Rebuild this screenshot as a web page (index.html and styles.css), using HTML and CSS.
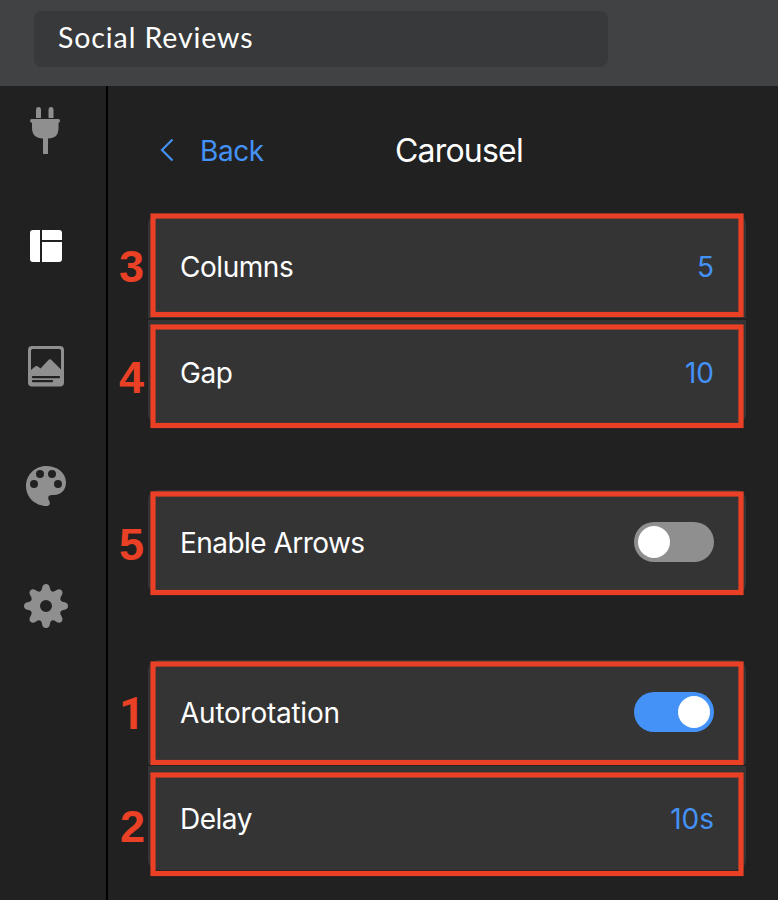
FILE: index.html
```html
<!DOCTYPE html>
<html lang="en">
<head>
<meta charset="utf-8">
<title>Social Reviews</title>
<link rel="stylesheet" href="styles.css">
</head>
<body>
<header class="topbar"><div class="name-field"><span class="name">Social Reviews</span></div></header>
<div class="workspace">
  <nav class="sidebar">
    <svg class="icon plug" viewBox="0 0 48 48"><path d="M15 4q0-3 2.500-3T20 4v8h-5zM27.500 4q0-3 2.500-3t2.500 3v8h-5zM9 14.500q0-1.500 1.500-1.500h27q1.500 0 1.500 1.500T37.500 17v5q0 10.500-10.500 10.500V48h-5V32.500Q11 32 11 22v-5q-2-.8-2-2.500z"/></svg>
    <svg class="icon active" viewBox="0 0 48 48"><path d="M12 8h7v32h-7q-3 0-3-3V11q0-3 3-3zM21 8h17q3 0 3 3v7H21zM21 20h20v17q0 3-3 3H21z"/></svg>
    <svg class="icon" viewBox="0 0 48 48"><path fill-rule="evenodd" d="M11 4h28q4 0 4 4v32.500q0 4-4 4H11q-4 0-4-4V8q0-4 4-4zm1 3q-2 0-2 2v19l4-3.500q1.500-1 3 0l2.500 2L27 18.500q2-2.500 4 0l9 9V9q0-2-2-2z"/><path class="cut" d="M12 35.200h26M12 39.200h19"/></svg>
    <svg class="icon" viewBox="0 0 48 48"><path fill-rule="evenodd" d="M25 4c11 0 20 6.500 20 16.500C45 28 40 33 33 33h-2c-4 0-4.500 3-3 5.500 1.500 3 1 5.500-2.500 5.500C14 44 5 35 5 24S14 4 25 4zM19 8a4 4 0 1 0 0 8 4 4 0 0 0 0-8zm12 0a4 4 0 1 0 0 8 4 4 0 0 0 0-8zM13 18a4 4 0 1 0 0 8 4 4 0 0 0 0-8zm24 0a4 4 0 1 0 0 8 4 4 0 0 0 0-8z"/></svg>
    <svg class="icon" viewBox="0 0 48 48"><path fill-rule="evenodd" d="M21 6.500C21.500 3 23 2 25 2s3.500 1 4 4.500c.5 3 3 4 5.500 2.300 2.500-1.800 4.500-2 6-.5s1.300 3.500-.3 6C38.400 17 39.500 19.500 42.500 20c3.500.5 4.500 2 4.500 4s-1 3.500-4.500 4c-3 .5-4.100 3-2.300 5.500 1.600 2.700 1.800 4.700.3 6.200s-3.500 1.300-6-.5c-2.500-1.700-5-.7-5.500 2.300-.5 3.500-2 4.500-4 4.500s-3.500-1-4-4.500c-.5-3-3-4-5.500-2.300-2.500 1.800-4.500 2-6 .5s-1.300-3.500.3-6.200C11.600 31 10.500 28.500 7.500 28 4 27.500 3 26 3 24s1-3.500 4.500-4c3-.5 4.100-3 2.300-5.700-1.600-2.500-1.800-4.500-.3-6s3.500-1.300 6 .5C18 10.500 20.500 9.500 21 6.500zM25 18a6 6 0 1 0 0 12 6 6 0 0 0 0-12z"/></svg>
  </nav>
  <main class="panel">
    <div class="heading">
      <a class="back"><svg class="chevron" viewBox="0 0 14 24"><path d="M12.500 1.500L2 12l10.500 10.500"/></svg><span class="back-label">Back</span></a>
      <h1 class="title">Carousel</h1>
    </div>
    <section class="group">
      <div class="row"><span class="label columns">Columns</span><span class="value">5</span>
        <svg class="frame f1" viewBox="0 0 598 106"><rect x="5" y="3" width="588" height="98.500"/></svg><b class="num n1">3</b></div>
      <div class="row"><span class="label gap">Gap</span><span class="value ten">10</span>
        <svg class="frame f2" viewBox="0 0 598 106"><rect x="5" y="3" width="588" height="98.500"/></svg><b class="num n2">4</b></div>
    </section>
    <section class="group">
      <div class="row"><span class="label arrows">Enable Arrows</span><span class="switch"></span>
        <svg class="frame f3" viewBox="0 0 598 106"><rect x="5" y="3" width="588" height="98.500"/></svg><b class="num n3">5</b></div>
    </section>
    <section class="group">
      <div class="row"><span class="label auto">Autorotation</span><span class="switch on"></span>
        <svg class="frame f3" viewBox="0 0 598 106"><rect x="5" y="3" width="588" height="98.500"/></svg><b class="num one">1</b></div>
      <div class="row"><span class="label delay">Delay</span><span class="value secs">10s</span>
        <svg class="frame f5" viewBox="0 0 598 106"><rect x="5" y="3" width="588" height="98.500"/></svg><b class="num n5">2</b></div>
    </section>
  </main>
</div>
</body>
</html>
```
FILE: styles.css
```css
* { box-sizing: border-box; }
body { margin: 0; height: 900px; overflow: hidden; background: #212121; color: #fff; font-family: Inter, "Liberation Sans", sans-serif; font-size: 28px; }
.topbar { height: 86px; padding: 11px 34px; background: #414243; }
.name-field { width: 574px; height: 56px; padding: 0 0 3px 24px; border-radius: 8px; background: #38393a; display: flex; align-items: center; }
.name { font-family: Lato, sans-serif; font-size: 28.500px; line-height: 53px; letter-spacing: .9px; }
.workspace { display: flex; height: 814px; }
.sidebar { width: 108px; border-right: 2px solid #000; padding: 20px 0 0 21px; display: flex; flex-direction: column; gap: 72px; }
.icon { display: block; width: 48px; height: 48px; flex: none; fill: #8f8f8f; }
.plug { margin-bottom: -4px; }
.active { fill: #fff; }
.cut { fill: none; stroke: #212121; stroke-width: 2.300; stroke-linecap: round; }
.panel { width: 638px; padding-left: 40px; }
.heading { height: 128px; display: flex; align-items: center; }
.back { width: 247px; padding-left: 12px; display: flex; align-items: center; gap: 26px; color: #4492f8; }
.back-label { padding-top: 1px; letter-spacing: -.4px; }
.chevron { width: 14px; height: 24px; fill: none; stroke: #4492f8; stroke-width: 2.200; }
.title { margin: 0; padding-top: 1px; font-size: 32px; font-weight: 400; letter-spacing: -.8px; }
.group { display: flex; flex-direction: column; gap: 2px; margin-bottom: 66px; border-radius: 10px; }
.row { position: relative; height: 104px; padding: 0 32px; display: flex; align-items: center; justify-content: space-between; background: #343434; }
.row:first-child { border-top-left-radius: 10px; border-top-right-radius: 10px; }
.row:nth-child(2), .row:only-child { border-bottom-left-radius: 10px; border-bottom-right-radius: 10px; }
.label, .value { padding-top: 1px; }
.value { color: #4492f8; }
.columns { letter-spacing: -.45px; }
.gap { letter-spacing: -.4px; }
.arrows { letter-spacing: -.54px; }
.auto { letter-spacing: -.25px; }
.delay { letter-spacing: -.5px; }
.switch { width: 80px; height: 40px; padding: 4px; border-radius: 20px; background: #8f8f8f; display: flex; }
.switch::before { content: ""; width: 32px; height: 32px; border-radius: 50%; background: #fff; }
.on { background: #4492f8; justify-content: flex-end; }
.frame { position: absolute; left: 0; width: 598px; height: 106px; fill: none; stroke: #ea4025; stroke-width: 5.200; overflow: visible; }
.f1 { top: -1px; }
.f2 { top: 4px; }
.f3 { top: 1px; }
.f5 { top: 6px; }
.num { position: absolute; left: -29px; top: 29px; color: #ea4025; font: bold 45px/48px "Liberation Sans", sans-serif; }
.n2 { top: 34px; }
.n3 { top: 31px; }
.one { top: 30px; font-family: Roboto, sans-serif; }
.n5 { top: 37px; left: -28px; }
```
